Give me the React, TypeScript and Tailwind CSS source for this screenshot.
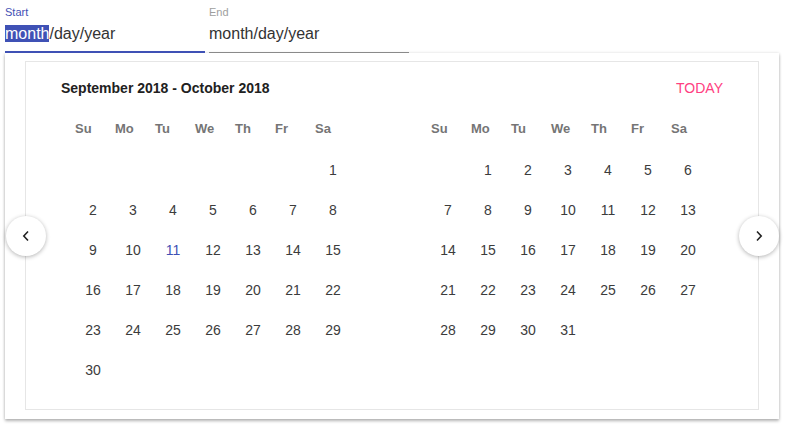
import React from "react";

const heads = ["Su", "Mo", "Tu", "We", "Th", "Fr", "Sa"];

function Month({ start, days, headPad, highlight }: { start: number; days: number; headPad: string; highlight?: number }) {
  const cells: (number | null)[] = [];
  for (let i = 0; i < start; i++) cells.push(null);
  for (let d = 1; d <= days; d++) cells.push(d);
  while (cells.length % 7 !== 0) cells.push(null);
  const rows: (number | null)[][] = [];
  for (let i = 0; i < cells.length; i += 7) rows.push(cells.slice(i, i + 7));
  return (
    <div className="w-[280px]">
      <div className="flex h-[20px]">
        {heads.map((h) => (
          <div key={h} className={`w-[40px] ${headPad} text-[13px] leading-[20px] font-bold text-[#757575]`}>
            {h}
          </div>
        ))}
      </div>
      <div className="mt-[11px]">
        {rows.map((r, ri) => (
          <div key={ri} className="flex h-[40px]">
            {r.map((d, ci) => (
              <div
                key={ci}
                className={`w-[40px] h-[40px] flex items-center justify-center text-[14px] ${
                  d === highlight ? "text-[#3f51b5]" : "text-[#3c3c3c]"
                }`}
              >
                {d ?? ""}
              </div>
            ))}
          </div>
        ))}
      </div>
    </div>
  );
}

export default function App() {
  return (
    <div className="w-[792px] h-[427px] bg-white overflow-hidden" style={{ fontFamily: '"Liberation Sans", Arial, sans-serif' }}>
      <div className="flex pl-[5px] gap-[4px] h-[53px]">
        <div className="w-[200px] h-[53px] border-b-2 border-[#3f51b5]">
          <div className="pt-[5px] text-[11px] leading-[14px] text-[#3f51b5]">Start</div>
          <div className="mt-[6px] text-[16px] leading-[18px] text-[#333333]">
            <span className="bg-[#3f51b5] text-white">month</span>/day/year
          </div>
        </div>
        <div className="w-[200px] h-[53px] border-b border-[#8a8a8a]">
          <div className="pt-[5px] text-[11px] leading-[14px] text-[#9e9e9e]">End</div>
          <div className="mt-[6px] text-[16px] leading-[18px] text-[#333333]">month/day/year</div>
        </div>
      </div>
      <div className="ml-[5px] w-[774px] h-[366px] bg-white pt-[8px] px-[20px] pb-[9px] shadow-[0_2px_3px_rgba(0,0,0,0.28),0_0_3px_rgba(0,0,0,0.12)]">
        <div className="relative h-[349px] border border-[#e6e6e6] pt-[16px]">
          <div className="flex justify-between items-center h-[20px] pl-[35px] pr-[35px]">
            <div className="text-[14px] font-bold text-[#212121]">September 2018 - October 2018</div>
            <div className="text-[14px] text-[#ff4081]">TODAY</div>
          </div>
          <div className="flex mt-[21px] pl-[47px] gap-[75px]">
            <Month start={6} days={30} headPad="pl-[2px]" highlight={11} />
            <Month start={1} days={31} headPad="pl-[3px]" />
          </div>
          <button className="absolute left-[-20px] top-[154px] w-[40px] h-[40px] rounded-full bg-white shadow-[0_1px_4px_rgba(0,0,0,0.3)] flex items-center justify-center">
            <svg width="8" height="12" viewBox="0 0 8 12">
              <polyline points="6,1.5 1.8,6 6,10.5" fill="none" stroke="#222" strokeWidth="1.6" />
            </svg>
          </button>
          <button className="absolute right-[-21px] top-[154px] w-[40px] h-[40px] rounded-full bg-white shadow-[0_1px_4px_rgba(0,0,0,0.3)] flex items-center justify-center">
            <svg width="8" height="12" viewBox="0 0 8 12">
              <polyline points="2,1.5 6.2,6 2,10.5" fill="none" stroke="#222" strokeWidth="1.6" />
            </svg>
          </button>
        </div>
      </div>
    </div>
  );
}
